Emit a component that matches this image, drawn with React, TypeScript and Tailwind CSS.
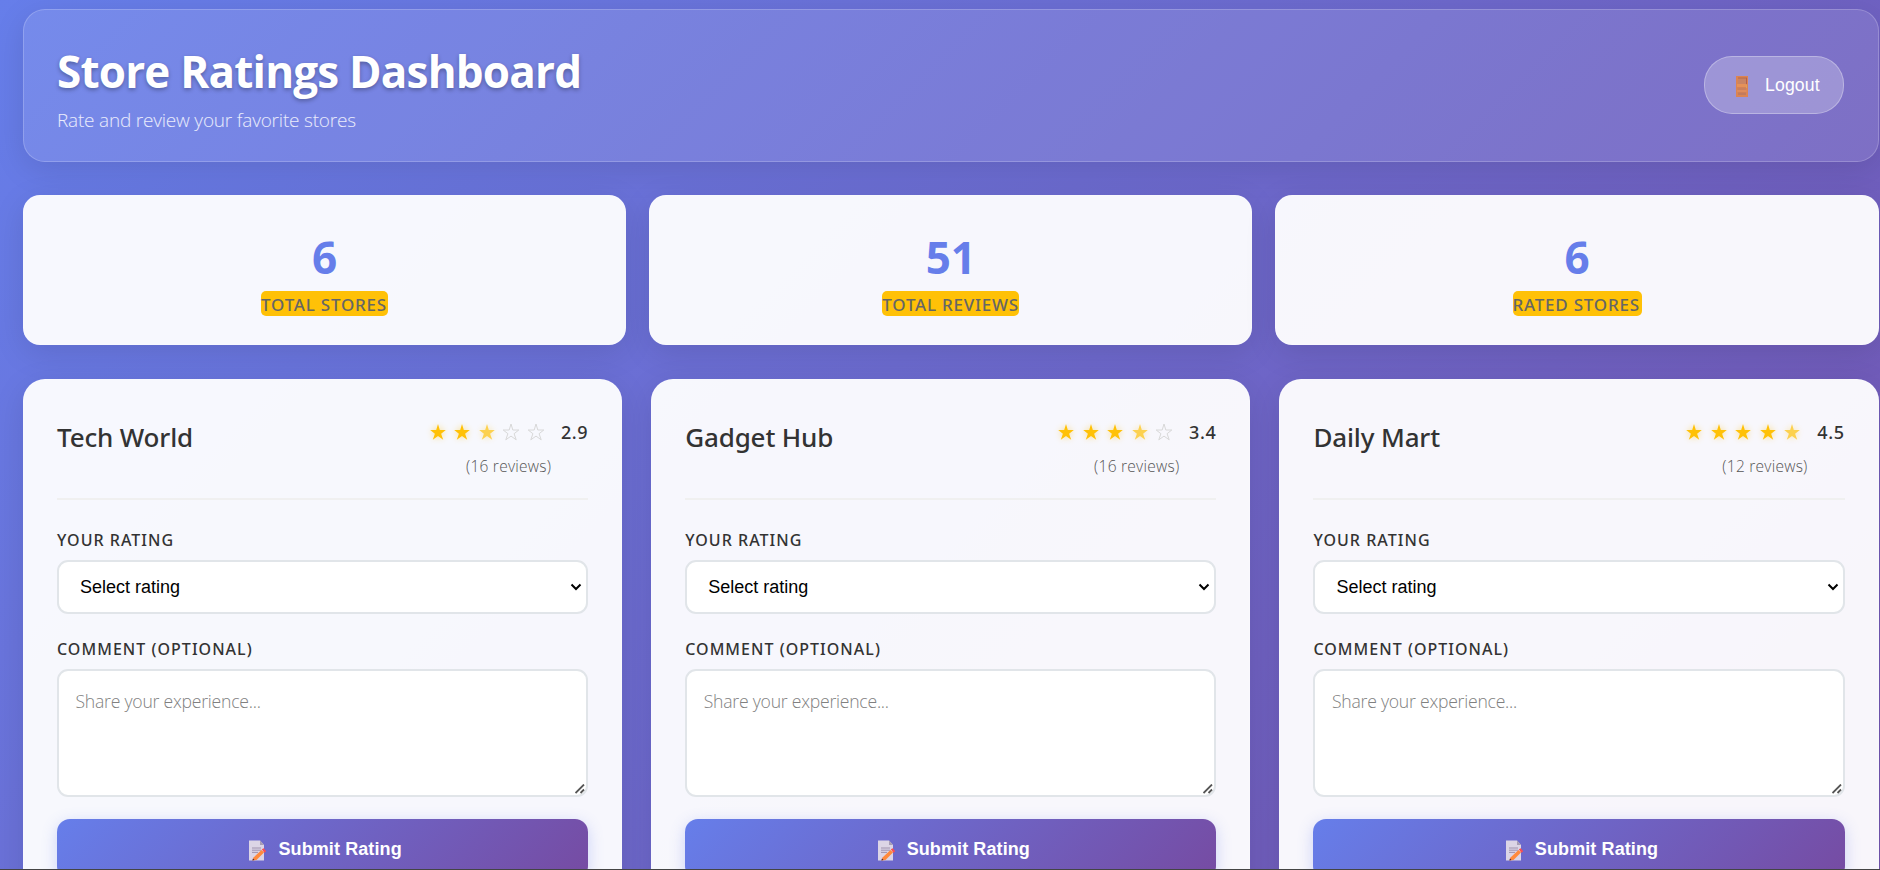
import type { ReactNode } from "react";

type Store = { name: string; rating: number; reviews: number };

const stats = [
  { value: 6, label: "Total Stores", width: "w-[127px]" },
  { value: 51, label: "Total Reviews", width: "w-[137px]" },
  { value: 6, label: "Rated Stores", width: "w-[129px]" },
];

const stores: Store[] = [
  { name: "Tech World", rating: 2.9, reviews: 16 },
  { name: "Gadget Hub", rating: 3.4, reviews: 16 },
  { name: "Daily Mart", rating: 4.5, reviews: 12 },
];

const STAR = "M8 0 L9.8 6 L15.8 6 L11.1 9.7 L13.2 15.8 L8 12.100 L2.8 15.8 L4.9 9.7 L0.2 6 L6.2 6 Z";

function Star({ fill }: { fill: "full" | "half" | "empty" }) {
  if (fill === "empty") {
    return (
      <svg viewBox="0 0 16 16" className="size-4 overflow-visible">
        <path d={STAR} fill="none" stroke="#d8d8d8" strokeWidth="1" />
      </svg>
    );
  }
  return (
    <svg
      viewBox="0 0 16 16"
      className={
        fill === "full"
          ? "size-4 overflow-visible drop-shadow-[0_0_3px_rgba(255,193,7,0.45)]"
          : "size-4 overflow-visible opacity-70 drop-shadow-[0_0_3px_rgba(255,193,7,0.45)]"
      }
    >
      <path d={STAR} fill="#ffc107" />
    </svg>
  );
}

function Stars({ rating }: { rating: number }) {
  return (
    <div className="flex gap-[8.500px]">
      {[1, 2, 3, 4, 5].map((n) => (
        <Star key={n} fill={rating >= n ? "full" : rating > n - 1 ? "half" : "empty"} />
      ))}
    </div>
  );
}

function DoorIcon() {
  return (
    <svg viewBox="0 0 12 21" className="mt-[2px] h-[21px] w-3">
      <rect width="12" height="21" fill="#dc8452" />
      <rect x="2" y="1.500" width="9" height="6.500" fill="#b5694a" />
      <rect x="2" y="2.500" width="8" height="5.500" fill="#c98465" />
      <rect x="1" y="8" width="9.500" height="3" fill="#e59159" />
      <rect x="1.500" y="11.500" width="8.500" height="2.500" fill="#c9805f" />
      <rect x="1" y="14" width="9.500" height="2" fill="#df8c5c" />
      <rect x="2" y="16.500" width="8" height="2.500" fill="#c27b5d" />
      <rect x="10" y="2" width="1" height="6" fill="#b75f48" />
      <rect x="10" y="9" width="1" height="3" fill="#d9a15a" />
    </svg>
  );
}

function MemoIcon() {
  return (
    <svg viewBox="0 0 18 21" className="mt-[2px] h-[21px] w-[18px]">
      <path d="M0 0.5h11l4 4.500v15.500H0z" fill="#dcd5e6" />
      <path d="M11 0.5l4 4.500h-4z" fill="#a79db5" />
      <path d="M3 8h9M3 10.200h9M3 12.400h6" stroke="#978ba8" strokeWidth="0.9" />
      <path d="M4.500 17.500l8-7.500 2.500 2.500-7.500 7.500-4 .5z" fill="#ff8a3d" />
      <path d="M12.800 9.300l2-1 2.400 3-1.800 1.400z" fill="#fa4f50" />
      <path d="M3.300 20.500l.7-2 1.500 1.600z" fill="#46243a" />
    </svg>
  );
}

function Label({ children }: { children: ReactNode }) {
  return (
    <div className="h-[22px] font-['Noto_Sans','Open_Sans',sans-serif] text-[16px] leading-[22px] font-medium tracking-[1.03px] text-[#333] uppercase">{children}</div>
  );
}

function StoreCard({ store }: { store: Store }) {
  return (
    <article className="h-[533px] rounded-[22px] border border-white/20 bg-white/95 px-[33px] pt-[33px] shadow-[0_8px_32px_rgba(0,0,0,0.1)]">
      <div className="flex h-[87px] justify-between border-b-2 border-[#f0f0f0]">
        <h2 className="pt-[5px] font-['Noto_Sans','Open_Sans',sans-serif] text-[26px] leading-[38px] font-medium tracking-[-0.15px] text-[#333]">{store.name}</h2>
        <div className="flex flex-col items-center">
          <div className="flex h-[38px] items-center gap-[17px]">
            <Stars rating={store.rating} />
            <span className="font-['Noto_Sans','Open_Sans',sans-serif] text-[18px] font-medium tracking-[0.6px] text-[#333]">{store.rating.toFixed(1)}</span>
          </div>
          <span className="pr-px text-[15.500px] leading-[30px] font-light tracking-[0.25px] text-[#555]">({store.reviews} reviews)</span>
        </div>
      </div>
      <div className="pt-[29px]">
        <Label>Your Rating</Label>
        <div className="mt-[9px] flex h-[54px] items-center justify-between rounded-[11px] border-2 border-[#e1e5e9] bg-white pr-[4px] pl-[21px] font-['Liberation_Sans',sans-serif] text-[18px] text-black">
          Select rating
          <svg viewBox="0 0 12 8" className="h-2 w-3">
            <path d="M1.500 1.500L6 6l4.500-4.500" fill="none" stroke="#000" strokeWidth="2" />
          </svg>
        </div>
      </div>
      <div className="pt-[24px]">
        <Label>Comment (Optional)</Label>
        <div className="relative mt-[9px]">
          <textarea
            placeholder="Share your experience..."
            className="block h-[128px] w-full resize-none rounded-[11px] border-2 border-[#e1e5e9] bg-white px-[16.500px] py-[18px] text-[17.600px] leading-[24px] font-light tracking-[-0.23px] placeholder:text-[#808080]"
          />
          <svg viewBox="0 0 10 10" className="absolute right-[3px] bottom-[3px] size-[10px]">
            <path d="M0.500 9L9 0.500M5.500 9L9 5.500" fill="none" stroke="#555" strokeWidth="1.800" />
          </svg>
        </div>
      </div>
      <button className="mt-[22px] flex h-[60px] w-full items-center justify-center gap-[11px] rounded-[13px] bg-[linear-gradient(135deg,#667eea_0%,#764ba2_100%)] pl-[6px] font-['Liberation_Sans',sans-serif] text-[18px] font-bold tracking-[0.1px] text-white shadow-[0_4px_15px_rgba(102,126,234,0.3)]">
        <MemoIcon />
        Submit Rating
      </button>
    </article>
  );
}

export default function App() {
  return (
    <div className="h-[870px] overflow-hidden border-b border-[#444]">
      <div className="h-[1490px] bg-[linear-gradient(135deg,#667eea_0%,#764ba2_100%)] pt-[9px] pr-[1.400px] pl-[23px] font-['Open_Sans','Noto_Sans',sans-serif]">
        <header className="flex h-[153px] items-center justify-between rounded-[22px] border border-white/20 bg-white/10 pr-[33.600px] pl-[33px] shadow-[0_8px_32px_rgba(0,0,0,0.1)]">
          <div className="pt-[7px]">
            <h1 className="text-[44px] leading-[54px] font-bold tracking-[-0.8px] text-white [text-shadow:0_2px_4px_rgba(0,0,0,0.3)]">Store Ratings Dashboard</h1>
            <p className="mt-[8px] text-[19px] leading-[28px] font-light tracking-[-0.2px] text-white/85">Rate and review your favorite stores</p>
          </div>
          <button className="-mt-px flex h-[58px] w-[140px] items-center gap-[17px] rounded-[28px] border border-white/30 bg-white/25 pl-[31px] font-['Liberation_Sans',sans-serif] text-[17.600px] tracking-[0.15px] text-white">
            <DoorIcon />
            Logout
          </button>
        </header>
        <section className="mt-[33px] grid grid-cols-3 gap-[23px]">
          {stats.map((s) => (
            <div key={s.label} className="flex h-[150px] flex-col items-center rounded-[17px] border border-white/20 bg-white/95 pt-[33px] shadow-[0_8px_32px_rgba(0,0,0,0.1)]">
              <div className="h-[56px] text-[44px] leading-[56px] font-bold text-[#667eea]">{s.value}</div>
              <div className={`mt-[6px] h-[25px] rounded-[5px] bg-[#ffc107] font-['Noto_Sans','Open_Sans',sans-serif] text-[17px] leading-[27px] font-medium tracking-[0.78px] whitespace-nowrap text-[#666] uppercase ${s.width}`}>{s.label}</div>
            </div>
          ))}
        </section>
        <main className="mt-[34px] grid grid-cols-3 gap-[29px]">
          {stores.map((s) => (
            <StoreCard key={s.name} store={s} />
          ))}
        </main>
      </div>
    </div>
  );
}
